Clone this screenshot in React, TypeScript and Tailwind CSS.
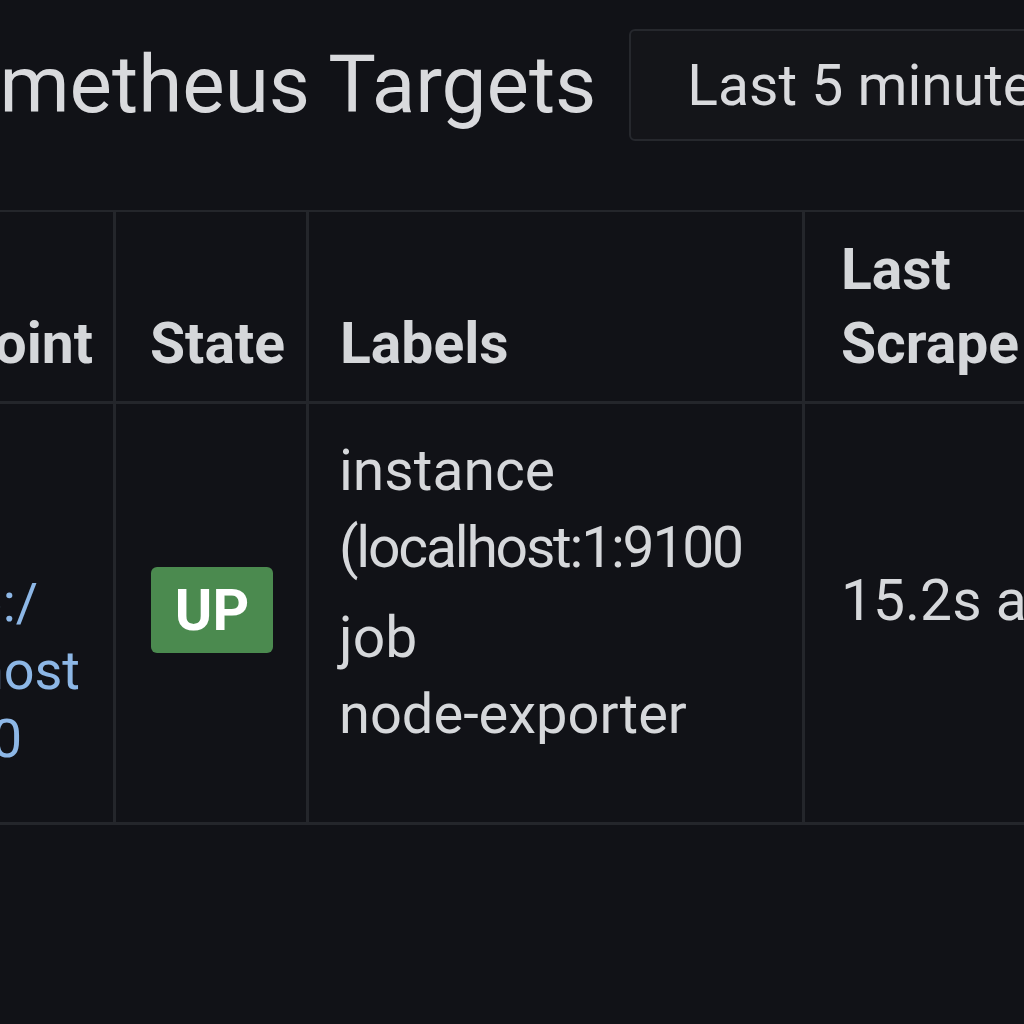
import React from "react";

export default function App() {
  return (
    <div className="w-[1024px] h-[1024px] overflow-hidden bg-[#111217] font-['Roboto',sans-serif] text-[#d6d8db]">
      {/* Header */}
      <div className="flex items-center h-[170px] w-[1400px]">
        <h1 className="ml-[-123px] whitespace-nowrap text-[80px] leading-none font-normal text-[#d9dadd]">
          Prometheus Targets
        </h1>
        <div className="ml-[33px] shrink-0 w-[700px] h-[112px] border-2 border-[#26282d] rounded-[6px] bg-[#141519] flex items-center pl-[56px]">
          <span className="text-[57px] leading-none whitespace-nowrap text-[#d9dadd]">Last 5 minutes</span>
        </div>
      </div>

      {/* Table */}
      <div className="mt-[40px] w-[1400px] border-t-2 border-b-[3px] border-[#24262b]">
        {/* Header row */}
        <div className="grid grid-cols-[116px_193px_496px_1fr] h-[192px] border-b-[3px] border-[#24262b] font-bold text-[57px] leading-[74px] text-[#d5d7da]">
          <div className="border-r-[3px] border-[#24262b] flex flex-col justify-end items-end pr-[20px] pb-[20px]">
            <span className="whitespace-nowrap">Endpoint</span>
          </div>
          <div className="border-r-[3px] border-[#24262b] flex flex-col justify-end pl-[34px] pb-[20px]">
            <span>State</span>
          </div>
          <div className="border-r-[3px] border-[#24262b] flex flex-col justify-end pl-[31px] pb-[20px]">
            <span>Labels</span>
          </div>
          <div className="flex flex-col justify-end pl-[36px] pb-[20px]">
            <span>Last</span>
            <span>Scrape</span>
          </div>
        </div>

        {/* Body row */}
        <div className="grid grid-cols-[116px_193px_496px_1fr] h-[418px] text-[57px]">
          <div className="border-r-[3px] border-[#24262b] flex flex-col items-end pr-[33px] pt-[165px] text-[54px] leading-[68px] text-[#8db7e6]">
            <span className="whitespace-nowrap mr-[42px]">http:/</span>
            <span className="whitespace-nowrap">/localhost</span>
            <span className="whitespace-nowrap mr-[58px]">:9100</span>
          </div>
          <div className="border-r-[3px] border-[#24262b] pl-[35px] pt-[163px]">
            <div className="w-[122px] h-[86px] rounded-[6px] bg-[#4b8a4f] flex items-center justify-center">
              <span className="text-white font-bold text-[57px] leading-none">UP</span>
            </div>
          </div>
          <div className="border-r-[3px] border-[#24262b] pl-[30px] pt-[28px] leading-[77px] text-[#d6d8db] flex flex-col gap-[13px]">
            <div className="flex flex-col">
              <span className="whitespace-nowrap">instance</span>
              <span className="whitespace-nowrap tracking-[-2.2px]">(localhost:1:9100</span>
            </div>
            <div className="flex flex-col">
              <span className="whitespace-nowrap">job</span>
              <span className="whitespace-nowrap text-[56px]">node-exporter</span>
            </div>
          </div>
          <div className="pl-[36px] pt-[158px] leading-[77px] text-[#d6d8db]">
            <span className="whitespace-nowrap">15.2s ago</span>
          </div>
        </div>
      </div>
    </div>
  );
}
